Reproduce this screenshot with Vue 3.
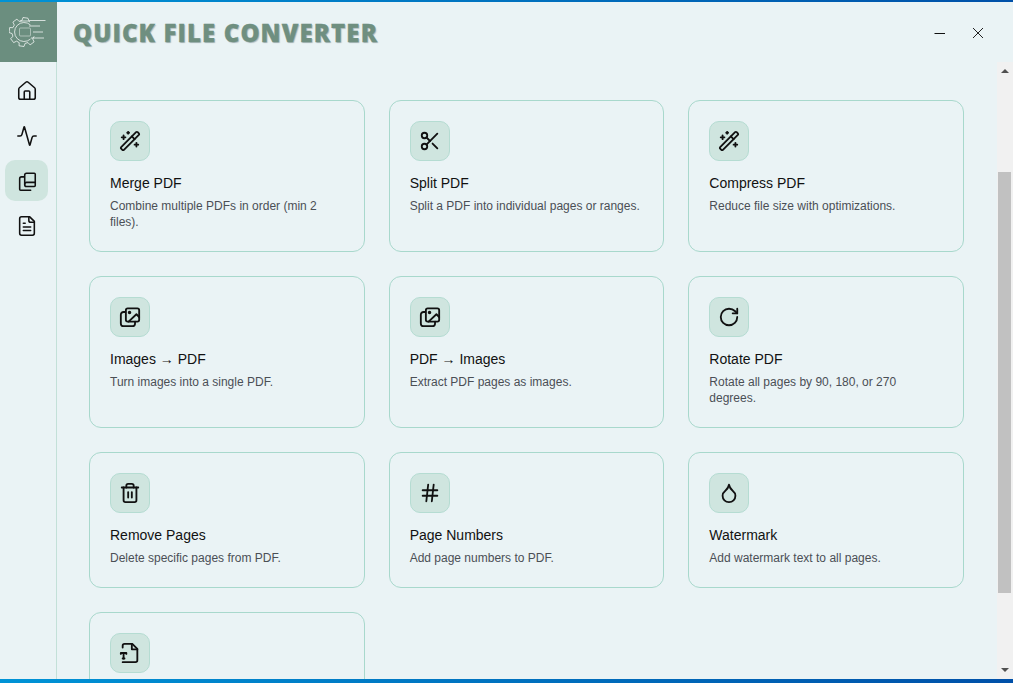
<template>
  <div class="window">
    <aside class="sidebar">
      <div class="logo">
        <svg width="40" height="40" viewBox="0 0 40 40" fill="none" stroke="#fff" stroke-width="0.8" stroke-opacity=".9">
          <path :d="gearPath" />
          <path d="M21.500 13a9.500 9.500 0 1 0 0 14" />
          <rect x="10.500" y="16" width="11" height="8" rx="1" stroke-opacity=".55" />
          <path d="M11 9h9l1-.5h15.500M20 14h11M24 20h10M22 26h13" />
        </svg>
      </div>
      <nav class="nav">
        <button v-for="item in navItems" :key="item.name" class="nav-btn" :class="{ active: item.active }">
          <svg width="22" height="22" viewBox="0 0 24 24" fill="none" stroke="currentColor" stroke-width="1.700" stroke-linecap="round" stroke-linejoin="round">
            <path v-for="d in item.paths" :key="d" :d="d" />
          </svg>
        </button>
      </nav>
    </aside>

    <div class="main">
      <header class="topbar">
        <h1 class="brand">QUICK FILE CONVERTER</h1>
        <div class="win-controls">
          <button class="win-btn">
            <svg width="12" height="12" viewBox="0 0 12 12" stroke="#111" stroke-width="1"><path d="M0.500 6.500h10.500" /></svg>
          </button>
          <button class="win-btn">
            <svg width="12" height="12" viewBox="0 0 12 12" stroke="#222" stroke-width="1"><path d="M1 1l10 10M11 1L1 11" /></svg>
          </button>
        </div>
      </header>

      <div class="body">
        <div ref="scroller" class="scroller">
          <div class="page">
            <div class="grid">
              <div v-for="tool in tools" :key="tool.title" class="card">
                <div class="card-icon">
                  <svg width="22" height="22" viewBox="0 0 24 24" fill="none" stroke="currentColor" stroke-width="2" stroke-linecap="round" stroke-linejoin="round">
                    <path v-for="d in tool.paths" :key="d" :d="d" />
                  </svg>
                </div>
                <div class="card-title">{{ tool.title }}</div>
                <div class="card-desc">{{ tool.desc }}</div>
              </div>
            </div>
          </div>
        </div>
        <div class="scrollbar">
          <span class="arrow arrow-up"></span>
          <span class="thumb"></span>
          <span class="arrow arrow-down"></span>
        </div>
      </div>
    </div>
  </div>
</template>

<script setup>
import { onMounted, ref } from 'vue'

// gear outline, open on the right where the circuit lines leave it
function buildGear() {
  const cx = 14.5
  const cy = 20
  const outer = 14.5
  const inner = 11.5
  const pt = (r, a) => {
    const rad = (a * Math.PI) / 180
    return `${(cx + r * Math.cos(rad)).toFixed(2)} ${(cy + r * Math.sin(rad)).toFixed(2)}`
  }
  let d = `M${pt(inner, -58)}`
  for (let a = -80; a > -340; a -= 45) {
    d += `L${pt(outer, a + 8)}L${pt(outer, a - 12)}L${pt(inner, a - 18)}L${pt(inner, a - 45 + 12)}`
  }
  return d
}
const gearPath = buildGear()

const wand = [
  'm21.64 3.64-1.28-1.28a1.21 1.21 0 0 0-1.72 0L2.360 18.640a1.21 1.21 0 0 0 0 1.72l1.28 1.28a1.2 1.2 0 0 0 1.72 0L21.640 5.360a1.2 1.2 0 0 0 0-1.72',
  'm14 7 3 3', 'M5 6v4', 'M19 14v4', 'M10 2v2', 'M7 8H3', 'M21 16h-4', 'M11 3H9'
]
const images = [
  'M7 6.500H5a3 3 0 0 0-3 3V19a3 3 0 0 0 3 3h9.500a3 3 0 0 0 3-3v-2',
  'M9.500 2.500H20a2 2 0 0 1 2 2V15a2 2 0 0 1-2 2H9.500a2 2 0 0 1-2-2V4.500a2 2 0 0 1 2-2z',
  'M22 12l-3-3-8.500 8',
  'M12.400 7a.9.9 0 1 1-1.800 0a.9.9 0 1 1 1.800 0'
]

const navItems = [
  { name: 'home', paths: ['M15 21v-8a1 1 0 0 0-1-1h-4a1 1 0 0 0-1 1v8', 'M3 10a2 2 0 0 1 .709-1.528l7-5.999a2 2 0 0 1 2.582 0l7 5.999A2 2 0 0 1 21 10v9a2 2 0 0 1-2 2H5a2 2 0 0 1-2-2z'] },
  { name: 'activity', paths: ['M22 12h-2.48a2 2 0 0 0-1.93 1.46l-2.35 8.36a.25.25 0 0 1-.48 0L9.240 2.180a.25.25 0 0 0-.48 0l-2.350 8.360A2 2 0 0 1 4.490 12H2'] },
  { name: 'library', active: true, paths: ['M9.500 5.500a2 2 0 0 1 2-2h8.500a1 1 0 0 1 1 1v12.500a1 1 0 0 1-1 1h-8.500a2 2 0 0 1-2-2z', 'M9.500 15.500a2 2 0 0 1 2-2H21', 'M9 7.500H6a2 2 0 0 0-2 2V21a1 1 0 0 0 1 1h11'] },
  { name: 'file', paths: ['M15 2H6a2 2 0 0 0-2 2v16a2 2 0 0 0 2 2h12a2 2 0 0 0 2-2V7Z', 'M14 2v4a2 2 0 0 0 2 2h4', 'M10 9H8', 'M16 13H8', 'M16 17H8'] }
]

const tools = [
  { title: 'Merge PDF', desc: 'Combine multiple PDFs in order (min 2 files).', paths: wand },
  { title: 'Split PDF', desc: 'Split a PDF into individual pages or ranges.', paths: ['M9 6a3 3 0 1 1-6 0a3 3 0 1 1 6 0', 'M9 18a3 3 0 1 1-6 0a3 3 0 1 1 6 0', 'M8.120 8.120 12 12', 'M20 4 8.120 15.880', 'M14.800 14.800 20 20'] },
  { title: 'Compress PDF', desc: 'Reduce file size with optimizations.', paths: wand },
  { title: 'Images → PDF', desc: 'Turn images into a single PDF.', paths: images },
  { title: 'PDF → Images', desc: 'Extract PDF pages as images.', paths: images },
  { title: 'Rotate PDF', desc: 'Rotate all pages by 90, 180, or 270 degrees.', paths: ['M21 12a9 9 0 1 1-9-9c2.520 0 4.930 1 6.740 2.740L21 8', 'M21 3v5h-5'] },
  { title: 'Remove Pages', desc: 'Delete specific pages from PDF.', paths: ['M3 6h18', 'M19 6v14c0 1-1 2-2 2H7c-1 0-2-1-2-2V6', 'M8 6V4c0-1 1-2 2-2h4c1 0 2 1 2 2v2', 'M10 11v6', 'M14 11v6'] },
  { title: 'Page Numbers', desc: 'Add page numbers to PDF.', paths: ['M4 9h16', 'M4 15h16', 'M10 3 8 21', 'M16 3l-2 18'] },
  { title: 'Watermark', desc: 'Add watermark text to all pages.', paths: ['M12 22a7 7 0 0 0 7-7c0-2-1-3.900-3-5.500s-3.500-4-4-6.500c-.5 2.500-2 4.900-4 6.500C6 11.100 5 13 5 15a7 7 0 0 0 7 7z'] },
  { title: 'Extract Text', desc: 'Extract text content from PDF.', paths: ['M4 6V4a2 2 0 0 1 2-2h8.500L20 7.500V20a2 2 0 0 1-2 2H4', 'M14 2v6h6', 'M2 13v-1h6v1', 'M5 12v6', 'M4 18h2'] }
]

const scroller = ref(null)

onMounted(() => {
  scroller.value.scrollTop = 136
})
</script>

<style>
html, body {
  margin: 0;
  height: 100%;
  overflow: hidden;
  background: #eaf3f5;
}
</style>

<style scoped>
.window {
  width: 1013px;
  height: 683px;
  box-sizing: border-box;
  display: flex;
  border-top: 2px solid #0078d4;
  border-bottom: 4px solid;
  border-left: 0;
  border-right: 0;
  border-image: linear-gradient(90deg, #0093d6, #0050a8) 1;
  background: #eaf3f5;
  font-family: "Liberation Sans", Arial, sans-serif;
  overflow: hidden;
}

.sidebar {
  width: 57px;
  flex-shrink: 0;
  box-sizing: border-box;
  border-right: 1px solid #c3e0d8;
  display: flex;
  flex-direction: column;
}

.logo {
  height: 60px;
  margin-right: -1px;
  background: #6b8e7f;
  display: flex;
  align-items: center;
  justify-content: center;
}

.nav {
  display: flex;
  flex-direction: column;
  align-items: center;
  gap: 4px;
  padding: 8px 3px 0 0;
}

.nav-btn {
  width: 43px;
  height: 41px;
  padding: 0;
  border: 0;
  border-radius: 10px;
  background: transparent;
  color: #111;
  display: flex;
  align-items: center;
  justify-content: center;
}

.nav-btn.active {
  background: #cfe5df;
}

.main {
  flex: 1;
  min-width: 0;
  display: flex;
  flex-direction: column;
}

.topbar {
  height: 60px;
  flex-shrink: 0;
  display: flex;
  align-items: center;
  justify-content: space-between;
  padding: 2px 23px 0 16px;
  box-sizing: border-box;
}

.brand {
  margin: 0 0 2px;
  color: #6f8f80;
  font-family: "Open Sans", sans-serif;
  font-size: 24px;
  font-weight: 800;
  letter-spacing: 1.100px;
  -webkit-text-stroke: 0.3px #6f8f80;
  text-shadow: 1px 1px 1px rgba(60, 80, 90, 0.35);
}

.win-controls {
  display: flex;
  gap: 14px;
}

.win-btn {
  width: 24px;
  height: 24px;
  padding: 0;
  border: 0;
  background: transparent;
  display: flex;
  align-items: center;
  justify-content: center;
}

.body {
  flex: 1;
  min-height: 0;
  display: flex;
}

.scroller {
  flex: 1;
  min-width: 0;
  overflow: hidden;
}

.page {
  box-sizing: border-box;
  padding: 174px 33px 35px 32px;
}

.grid {
  display: grid;
  grid-template-columns: repeat(3, 1fr);
  gap: 24px;
}

.card {
  box-sizing: border-box;
  padding: 20px 20px 21px;
  border: 1px solid #a8d8cc;
  border-radius: 12px;
}

.card-icon {
  width: 40px;
  height: 40px;
  box-sizing: border-box;
  border: 1px solid #b5dcd2;
  border-radius: 10px;
  background: #cfe5df;
  color: #111;
  display: flex;
  align-items: center;
  justify-content: center;
}

.card-title {
  margin-top: 12px;
  font-size: 14px;
  line-height: 20px;
  color: #111;
}

.card-desc {
  margin-top: 5px;
  font-size: 12px;
  line-height: 16px;
  color: #4a4f55;
}

.scrollbar {
  width: 16px;
  flex-shrink: 0;
  box-sizing: border-box;
  background: #f1f1f1;
  padding: 0 2px 0 1px;
  display: flex;
  flex-direction: column;
  align-items: stretch;
  position: relative;
}

.thumb {
  height: 421px;
  margin-top: 110px;
  background: #c1c1c1;
}

.arrow {
  position: absolute;
  left: 4px;
  width: 0;
  height: 0;
  border-left: 4px solid transparent;
  border-right: 4px solid transparent;
}

.arrow-up {
  top: 7px;
  border-bottom: 4px solid #505050;
}

.arrow-down {
  bottom: 7px;
  border-top: 4px solid #505050;
}
</style>
